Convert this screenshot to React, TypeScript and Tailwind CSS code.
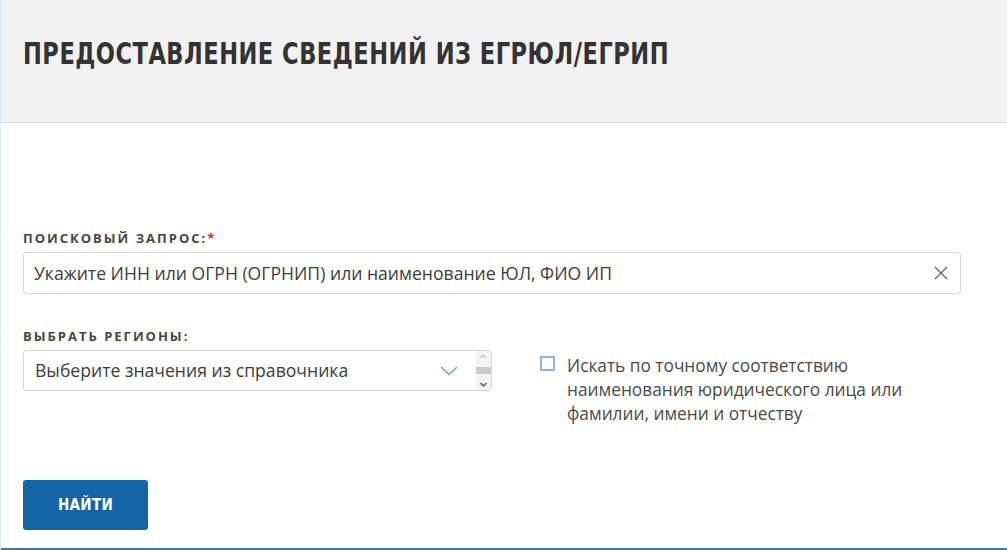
import React, { useState } from "react";

const App = () => {
  const [query, setQuery] = useState("");
  const [exact, setExact] = useState(false);

  return (
    <div className="h-[550px] w-full overflow-hidden bg-white border-l border-[#dde7f1] font-['Open_Sans',sans-serif]">
      <div className="flex h-[550px] flex-col border-b-2 border-[#3f76ab]">
        {/* Header */}
        <div className="h-[123px] bg-[#f2f2f2] border-b border-[#dcdcdc] px-[22px] pt-[31px]">
          <h1 className="origin-left scale-x-[0.835] whitespace-nowrap font-['DejaVu_Sans_Condensed',sans-serif] text-[30px] font-bold uppercase tracking-[0.6px] text-[#333333]">
            Предоставление сведений из ЕГРЮЛ/ЕГРИП
          </h1>
        </div>

        <div className="px-[22px] pt-[106px]">
          {/* Search */}
          <label className="block text-[13px] font-bold uppercase tracking-[2px] text-[#4a4540] leading-[18px]">
            Поисковый запрос:<span className="text-[#e0262b]">*</span>
          </label>
          <div className="mt-[5px] flex h-[42px] w-[938px] items-center rounded-[3px] border border-[#d3d8de] pl-[10px] pr-[12px]">
            <input
              value={query}
              onChange={(e) => setQuery(e.target.value)}
              placeholder="Укажите ИНН или ОГРН (ОГРНИП) или наименование ЮЛ, ФИО ИП"
              className="flex-1 bg-transparent text-[17.6px] text-[#333] outline-none placeholder:text-[#3c3c3c]"
            />
            <svg width="14" height="14" viewBox="0 0 14 14" className="text-[#666]">
              <path d="M1 1L13 13M13 1L1 13" stroke="currentColor" strokeWidth="1.4" />
            </svg>
          </div>

          {/* Regions + checkbox */}
          <div className="mt-[33px] flex items-start">
            <div className="w-[469px]">
              <label className="block text-[13px] font-bold uppercase tracking-[2px] text-[#4a4540] leading-[18px]">
                Выбрать регионы:
              </label>
              <div className="mt-[5px] flex h-[41px] items-center rounded-[3px] border border-[#d3d8de] pl-[11px]">
                <span className="flex-1 text-[17.6px] text-[#3c3c3c]">Выберите значения из справочника</span>
                <svg width="18" height="10" viewBox="0 0 18 10" className="mr-[18px] text-[#6fa1d6]">
                  <path d="M1 1L9 8.5L17 1" fill="none" stroke="currentColor" strokeWidth="1.5" />
                </svg>
                <div className="flex h-full w-[15px] flex-col items-center justify-between bg-[#f4f4f4] py-[3px]">
                  <svg width="7" height="5" viewBox="0 0 7 5">
                    <path d="M0.5 4L3.5 1L6.5 4" fill="none" stroke="#c4c4c4" strokeWidth="1.2" />
                  </svg>
                  <div className="h-[7px] w-full bg-[#c9c9c9]" />
                  <svg width="7" height="5" viewBox="0 0 7 5">
                    <path d="M0.5 1L3.5 4L6.5 1" fill="none" stroke="#555" strokeWidth="1.4" />
                  </svg>
                </div>
              </div>
            </div>

            <label className="ml-[48px] mt-[27px] flex cursor-pointer items-start">
              <input
                type="checkbox"
                checked={exact}
                onChange={() => setExact(!exact)}
                className="peer sr-only"
              />
              <span className="mt-[2px] h-[15px] w-[15px] shrink-0 border-2 border-[#8fb3da] bg-white" />
              <span className="ml-[12px] w-[360px] text-[17.3px] leading-[24px] text-[#4a4a4a]">
                Искать по точному соответствию наименования юридического лица или фамилии, имени и отчеству
              </span>
            </label>
          </div>

          {/* Submit */}
          <button className="mt-[54px] flex h-[50px] w-[125px] items-center justify-center rounded-[3px] bg-[#1464a8] font-['DejaVu_Sans_Condensed',sans-serif] text-[15px] font-bold uppercase tracking-[0.3px] text-white">
            Найти
          </button>
        </div>
      </div>
    </div>
  );
};

export default App;
